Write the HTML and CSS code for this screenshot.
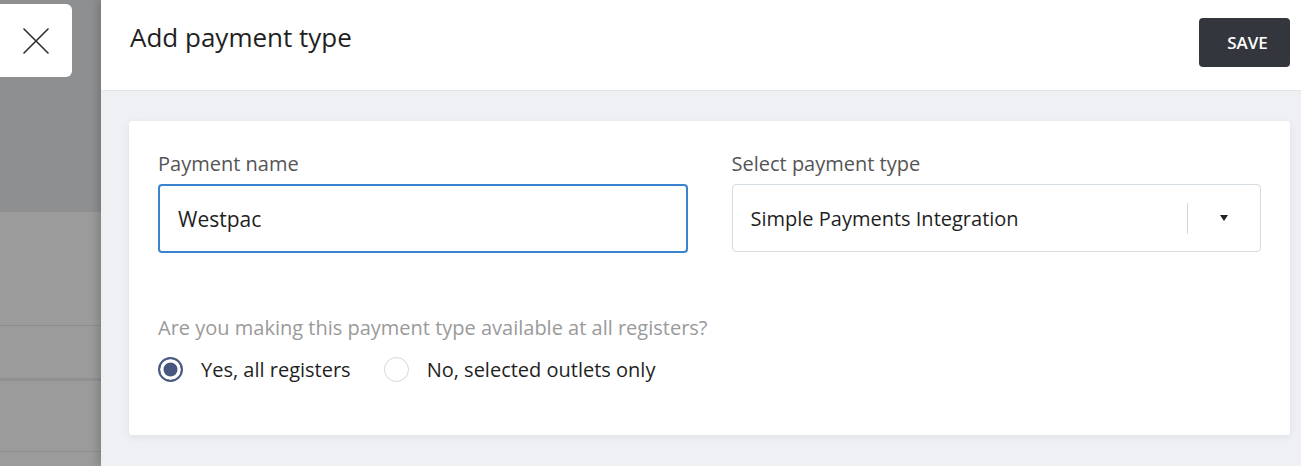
FILE: index.html
```html
<!DOCTYPE html>
<html lang="en">
<head>
    <meta charset="UTF-8">
    <meta name="viewport" content="width=device-width, initial-scale=1.0">
    <title>Add payment type</title>
    <link rel="stylesheet" href="styles.css">
</head>
<body>
    <main class="screen">
        <!-- page behind the drawer, dimmed -->
        <div class="backdrop">
            <div class="backdrop_top"></div>
            <div class="backdrop_row row_a"></div>
            <div class="backdrop_row row_b"></div>
            <div class="backdrop_row row_c"></div>
            <div class="backdrop_row row_d"></div>
            <button class="btn_close" aria-label="Close">
                <svg width="26" height="26" viewBox="0 0 26 26">
                    <path d="M1 1 L25 25 M25 1 L1 25" stroke="#2d2d2d" stroke-width="1.6" fill="none" stroke-linecap="round"/>
                </svg>
            </button>
        </div>

        <section class="drawer">
            <header class="drawer_head">
                <h1 class="drawer_title">Add payment type</h1>
                <button class="btn_save">SAVE</button>
            </header>

            <div class="drawer_body">
                <div class="card">
                    <div class="fields">
                        <div class="field">
                            <label class="field_label">Payment name</label>
                            <div class="input input_focus">Westpac</div>
                        </div>
                        <div class="field">
                            <label class="field_label">Select payment type</label>
                            <div class="input select">
                                <span class="select_value">Simple Payments Integration</span>
                                <span class="select_arrow"><span class="arrow"></span></span>
                            </div>
                        </div>
                    </div>

                    <p class="question">Are you making this payment type available at all registers?</p>
                    <div class="radios">
                        <label class="radio"><span class="radio_dot checked"></span>Yes, all registers</label>
                        <label class="radio"><span class="radio_dot"></span>No, selected outlets only</label>
                    </div>
                </div>
            </div>
        </section>
    </main>
</body>
</html>
```

FILE: styles.css
```css
* {
    margin: 0;
    padding: 0;
    box-sizing: border-box;
}

body {
    font-family: 'Open Sans', 'Liberation Sans', sans-serif;
    color: #222;
    background-color: #eef0f4;
}

.screen {
    display: flex;
    width: 1301px;
    height: 466px;
    overflow: hidden;
}

/* dimmed page */
.backdrop {
    position: relative;
    width: 101px;
    flex-shrink: 0;
    background-color: #9b9b9b;
}

.backdrop_top {
    height: 212px;
    background-color: #8e8f91;
}

.backdrop_row {
    border-bottom: 1px solid #8d8d8d;
}

.row_a { height: 114px; }
.row_b { height: 55px; border-bottom-width: 3px; border-bottom-color: #8f9092; }
.row_c { height: 71px; }
.row_d { height: 20px; border: none; }

.btn_close {
    position: absolute;
    top: 4px;
    left: 0;
    width: 72px;
    height: 73px;
    border: none;
    border-radius: 0 6px 6px 0;
    background-color: white;
    display: flex;
    align-items: center;
    justify-content: center;
}

/* drawer */
.drawer {
    flex: 1;
    display: flex;
    flex-direction: column;
    background-color: #eef0f4;
    box-shadow: -3px 0 8px rgba(0, 0, 0, 0.18);
    z-index: 1;
}

.drawer_head {
    height: 91px;
    display: flex;
    justify-content: space-between;
    align-items: flex-start;
    padding: 18px 11px 0 29px;
    background-color: white;
    border-bottom: 1px solid #e2e4e8;
}

.drawer_title {
    margin-top: 2px;
    font-size: 26px;
    line-height: 34px;
    font-weight: 400;
    color: #1f1f1f;
}

.btn_save {
    width: 91px;
    height: 49px;
    padding-left: 6px;
    border: none;
    border-radius: 4px;
    background-color: #33373d;
    color: white;
    font-family: 'Open Sans', 'Liberation Sans', sans-serif;
    font-size: 17px;
    font-weight: 600;
}

.drawer_body {
    padding: 30px 11px 0 28px;
}

.card {
    height: 314px;
    padding: 29px 29px 0 29px;
    background-color: white;
    border-radius: 3px;
    box-shadow: 0 2px 8px rgba(40, 50, 70, 0.08);
}

.fields {
    display: grid;
    grid-template-columns: 1fr 1fr;
    gap: 44px;
}

.field_label {
    display: block;
    margin-bottom: 7px;
    font-size: 20px;
    line-height: 27px;
    color: #555;
}

.input {
    height: 69px;
    display: flex;
    align-items: center;
    padding-left: 18px;
    border: 1px solid #d5dce1;
    border-radius: 4px;
    font-size: 20px;
    color: #1f1f1f;
}

.input_focus {
    border: 2px solid #3a84cf;
    font-size: 21px;
}

.select {
    margin-top: 2px;
    height: 68px;
    justify-content: space-between;
}

.select_arrow {
    width: 73px;
    height: 31px;
    display: flex;
    align-items: center;
    justify-content: center;
    border-left: 1px solid #d7d7d7;
}

.arrow {
    width: 0;
    height: 0;
    border-left: 4px solid transparent;
    border-right: 4px solid transparent;
    border-top: 6px solid #222;
}

.question {
    margin-top: 61px;
    font-size: 20px;
    line-height: 27px;
    color: #9a9a9a;
}

.radios {
    display: flex;
    gap: 33px;
    margin-top: 15px;
}

.radio {
    display: flex;
    align-items: center;
    gap: 18px;
    font-size: 20px;
    line-height: 27px;
    color: #1f1f1f;
}

.radio_dot {
    width: 25px;
    height: 25px;
    border: 1.5px solid #d8d6d2;
    border-radius: 50%;
    background-color: white;
}

.radio_dot.checked {
    border: 2px solid #4a5a82;
    background-color: #47577f;
    box-shadow: inset 0 0 0 3.5px white;
}
```
